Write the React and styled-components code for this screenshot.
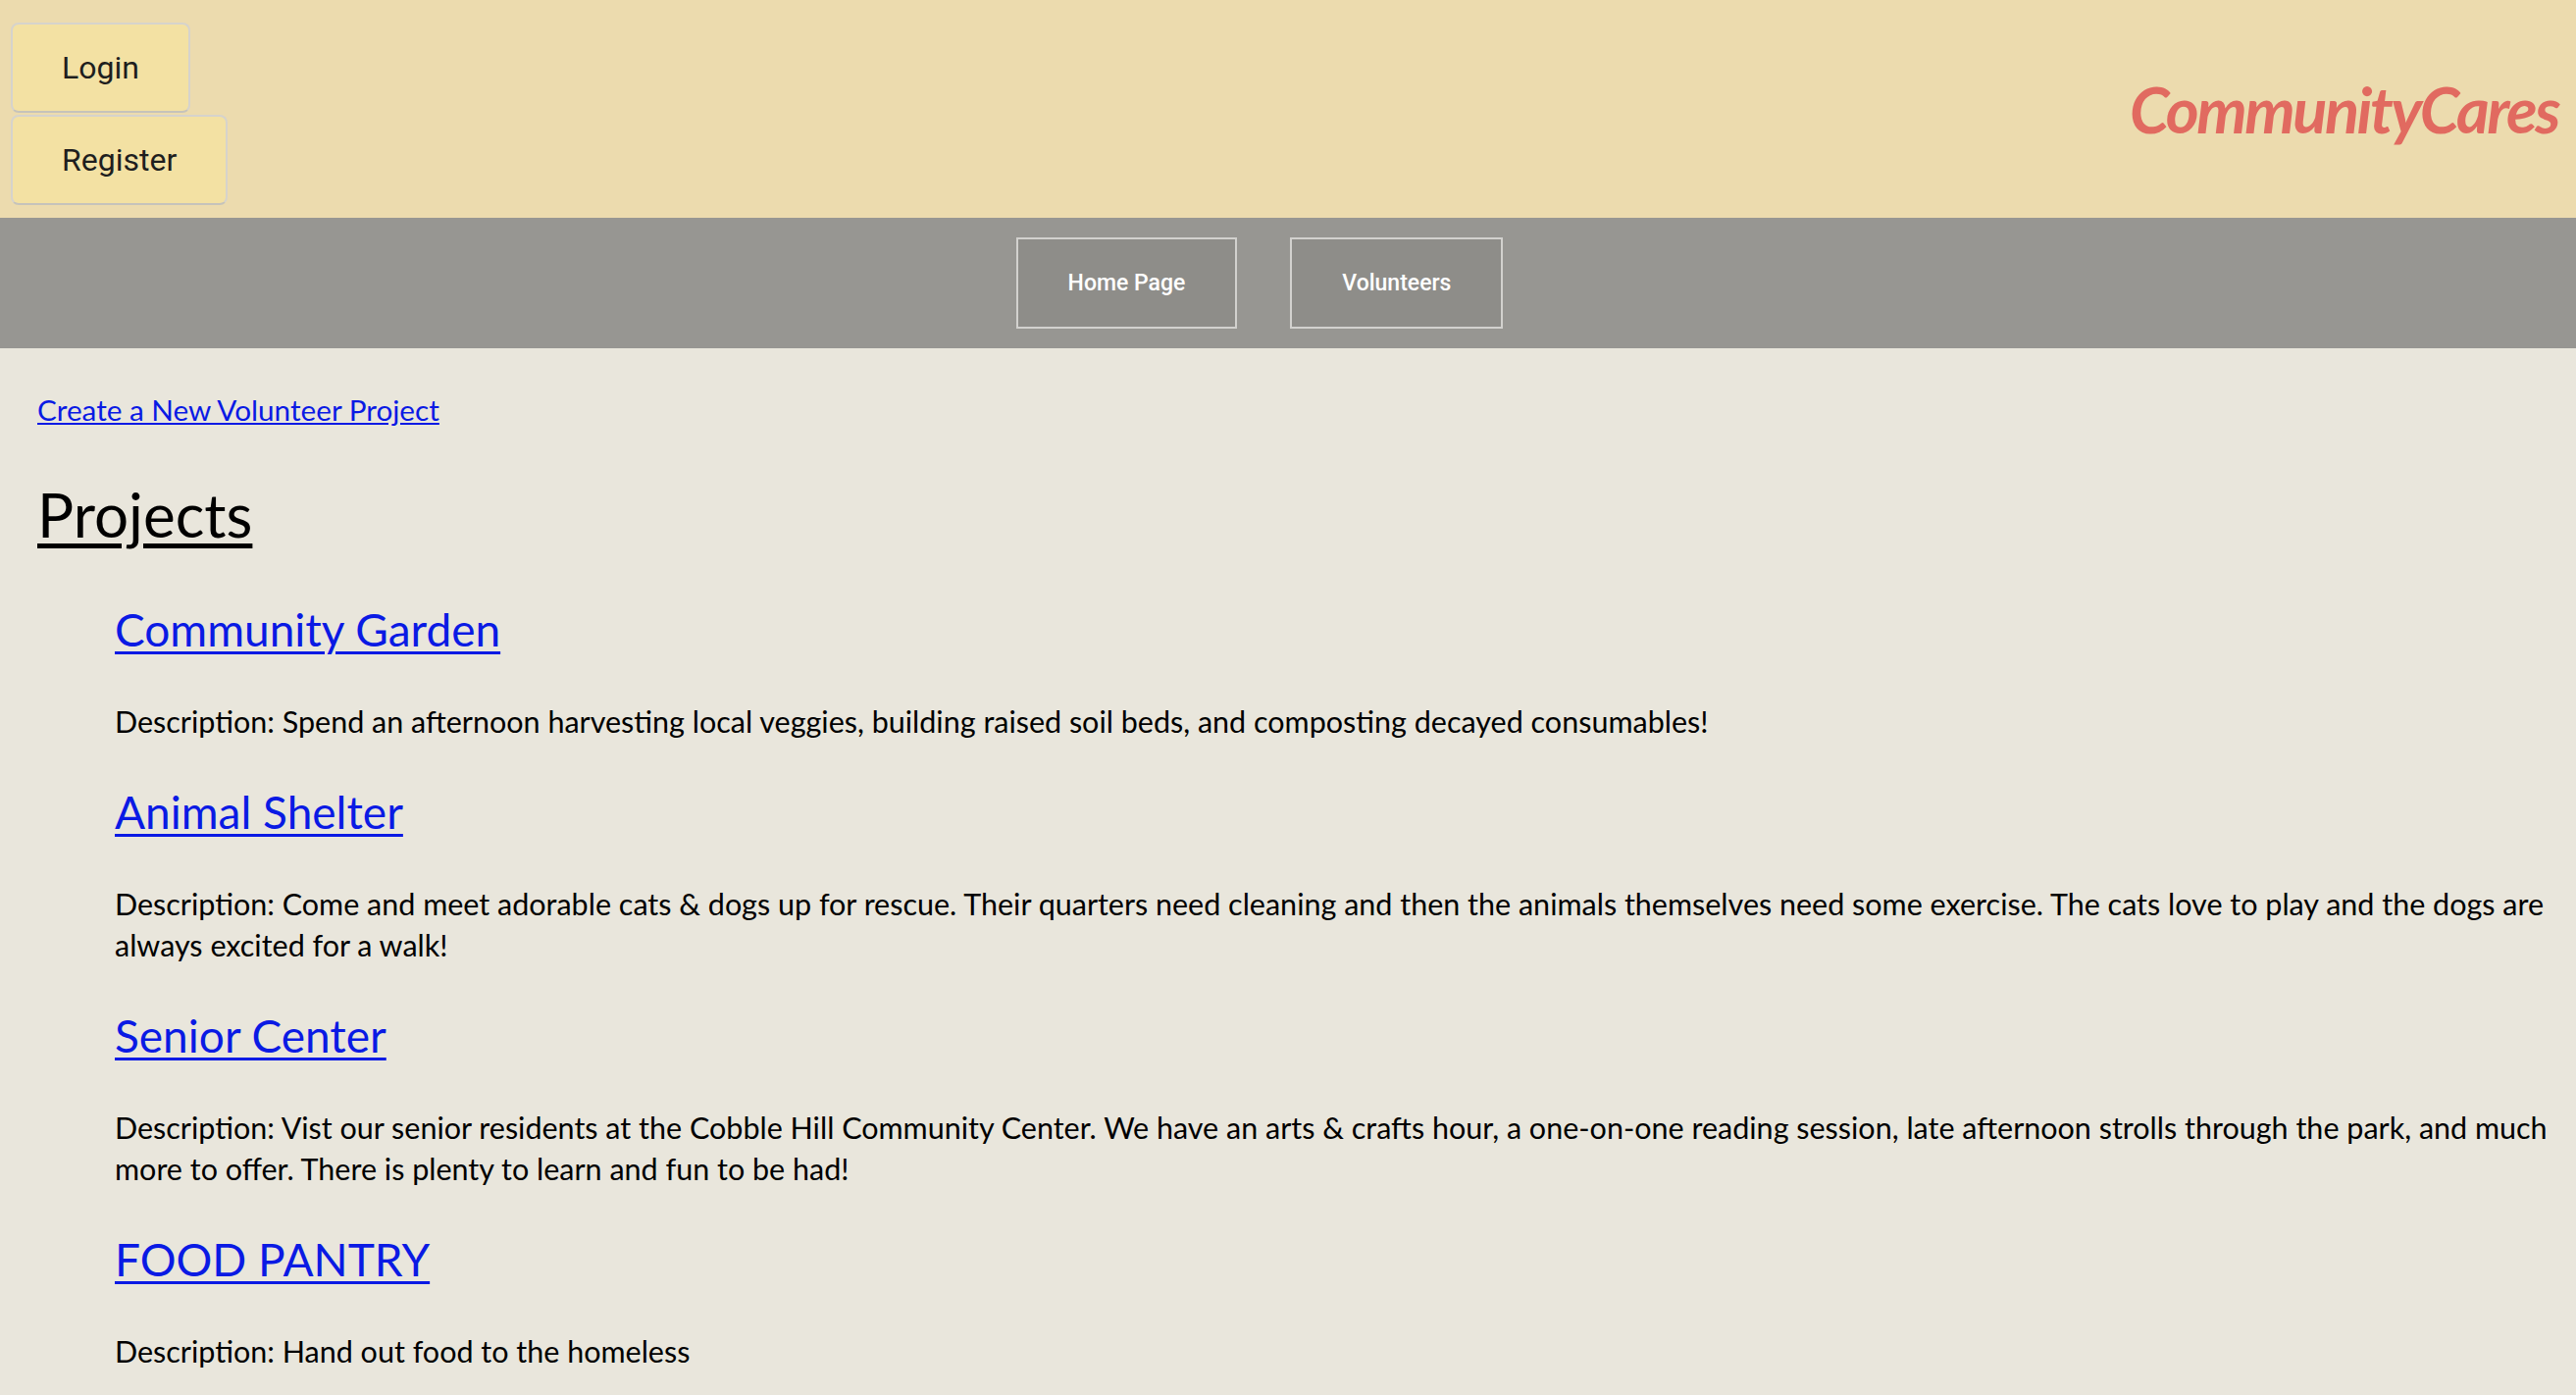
import React from "react";
import styled, { createGlobalStyle } from "styled-components";

const GlobalStyle = createGlobalStyle`
  html, body {
    margin: 0;
    padding: 0;
    background: #e9e6dc;
  }
  body {
    font-family: Lato, "Open Sans", sans-serif;
    color: #000;
  }
`;

const Page = styled.div`
  min-height: 1422px;
  background: #e9e6dc;
`;

const Header = styled.header`
  height: 222px;
  box-sizing: border-box;
  background: #ecdbae;
  display: flex;
  justify-content: space-between;
  align-items: center;
  padding: 0 18px 0 11px;
`;

const AuthColumn = styled.div`
  display: flex;
  flex-direction: column;
  align-items: flex-start;
  gap: 2px;
  margin-top: 10px;
`;

const AuthButton = styled.button`
  height: 92px;
  box-sizing: border-box;
  padding: 0 50px;
  background: #f3e1a3;
  border: 2px solid #d6d3cc;
  border-bottom-color: #c6c3bb;
  border-radius: 8px;
  font-family: Roboto, "Liberation Sans", sans-serif;
  font-size: 32px;
  color: #1e1e1e;
  cursor: pointer;
`;

const Brand = styled.div`
  font-family: Lato, "Open Sans", sans-serif;
  font-style: italic;
  font-weight: 700;
  font-size: 65px;
  color: #e16a60;
  letter-spacing: -2.5px;
`;

const NavBar = styled.nav`
  height: 133px;
  background: #979692;
  display: flex;
  justify-content: center;
  align-items: center;
  gap: 54px;
  padding-right: 58px;
`;

const NavButton = styled.button`
  height: 93px;
  box-sizing: border-box;
  padding: 0 51px;
  background: #8e8d89;
  border: 2px solid #d2d1ce;
  font-family: Roboto, "Liberation Sans", sans-serif;
  font-weight: 500;
  font-size: 23px;
  color: #ffffff;
  cursor: pointer;
`;

const Main = styled.main`
  padding: 42px 18px 0 38px;
  display: flex;
  flex-direction: column;
  align-items: flex-start;
`;

const TextLink = styled.a`
  font-size: 29.7px;
  line-height: 42px;
  color: #0a1ae4;
  text-decoration: underline;
`;

const PageTitle = styled.h1`
  margin: 48px 0 0;
  font-size: 62px;
  line-height: 74px;
  font-weight: 400;
  text-decoration: underline;
  text-decoration-thickness: 5px;
  text-underline-offset: 6px;
`;

const ProjectList = styled.ul`
  list-style: none;
  margin: 53px 0 0;
  padding: 0 0 0 79px;
  display: flex;
  flex-direction: column;
  gap: 44px;
`;

const ProjectItem = styled.li`
  display: flex;
  flex-direction: column;
  align-items: flex-start;
  gap: 44px;
`;

const ProjectTitle = styled.a`
  font-size: 46px;
  line-height: 56px;
  color: #0a1ae4;
  text-decoration: underline;
  text-decoration-thickness: 3px;
  text-underline-offset: 5px;
`;

const Description = styled.p`
  margin: 0;
  font-size: 30.5px;
  line-height: 42px;
`;

const projects = [
  {
    name: "Community Garden",
    description:
      "Spend an afternoon harvesting local veggies, building raised soil beds, and composting decayed consumables!",
  },
  {
    name: "Animal Shelter",
    description:
      "Come and meet adorable cats & dogs up for rescue. Their quarters need cleaning and then the animals themselves need some exercise. The cats love to play and the dogs are always excited for a walk!",
  },
  {
    name: "Senior Center",
    description:
      "Vist our senior residents at the Cobble Hill Community Center. We have an arts & crafts hour, a one-on-one reading session, late afternoon strolls through the park, and much more to offer. There is plenty to learn and fun to be had!",
  },
  {
    name: "FOOD PANTRY",
    description: "Hand out food to the homeless",
  },
];

export default function App() {
  return (
    <Page>
      <GlobalStyle />
      <Header>
        <AuthColumn>
          <AuthButton>Login</AuthButton>
          <AuthButton>Register</AuthButton>
        </AuthColumn>
        <Brand>CommunityCares</Brand>
      </Header>
      <NavBar>
        <NavButton>Home Page</NavButton>
        <NavButton>Volunteers</NavButton>
      </NavBar>
      <Main>
        <TextLink href="#">Create a New Volunteer Project</TextLink>
        <PageTitle>Projects</PageTitle>
        <ProjectList>
          {projects.map((p) => (
            <ProjectItem key={p.name}>
              <ProjectTitle href="#">{p.name}</ProjectTitle>
              <Description>Description: {p.description}</Description>
            </ProjectItem>
          ))}
        </ProjectList>
      </Main>
    </Page>
  );
}
